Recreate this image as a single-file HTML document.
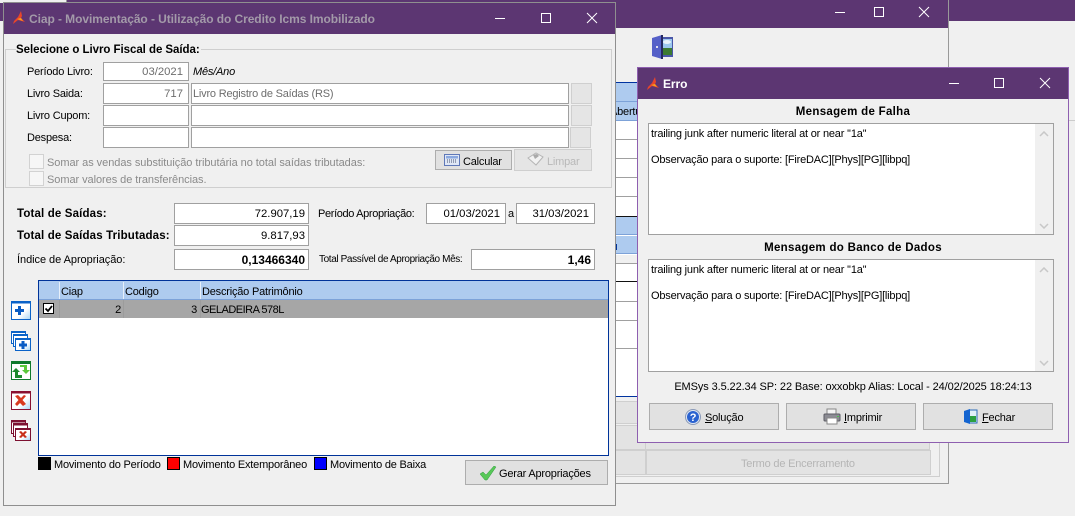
<!DOCTYPE html>
<html><head><meta charset="utf-8"><style>
html,body{margin:0;padding:0;width:1075px;height:516px;overflow:hidden;background:#f0f0f0}
body{position:relative;font-family:"Liberation Sans",sans-serif;font-size:11px;letter-spacing:-.2px;color:#000}
div,span,svg{position:absolute;box-sizing:border-box;white-space:nowrap}
.t{line-height:14px;height:14px;margin-top:1px}
.b{font-weight:bold;letter-spacing:.1px;font-size:11.5px}
.i{background:#fff;border:1px solid #a0a0a0;line-height:17px;padding:1px 5px 0 4px;color:#000;text-align:right;font-size:11.3px;letter-spacing:0}
.n{padding-right:3px}
.i.b{font-size:12px;letter-spacing:0}
.g{color:#6d6d6d}
.l{text-align:left}
.btn{background:#e1e1e1;border:1px solid #adadad}
.bd{background:#e5e5e5;border:1px solid #cfcfcf}
.h{background:#aecbef}
.ln{height:1px;background:#a0a0a0}
.tt{font-weight:bold;font-size:12px;line-height:14px;letter-spacing:-.07px}
.m{background:#fff;border:1px solid #a0a0a0}
.mt{left:2px;line-height:14px;margin-top:1px}
</style></head><body>
<!-- background windows -->
<div style="left:0;top:0;width:1075px;height:21px;background:#5c3672"></div>
<div style="left:0;top:0;width:66px;height:3px;background:#f0f0f0"></div>
<div style="left:66px;top:0;width:1px;height:3px;background:#999"></div>
<div style="left:616px;top:0;width:332px;height:28px;background:#5c3672"></div>
<div style="left:616px;top:28px;width:332px;height:455px;background:#f0f0f0"></div>
<div style="left:948px;top:0;width:1px;height:484px;background:#999"></div>
<div style="left:616px;top:483px;width:333px;height:1px;background:#999"></div>
<div style="left:949px;top:21px;width:126px;height:495px;background:#f0f0f0"></div>
<div style="left:1069px;top:120px;width:6px;height:1px;background:#ccc"></div>

<svg style="left:834px;top:6px" width="100" height="14" viewBox="0 0 100 14" fill="none" stroke="#fff" stroke-width="1"><path d="M1 6.500h10"/><path d="M40.500 1.500h9v9h-9z"/><path d="M85 1l10 10M95 1L85 11"/></svg>

<!-- door icon -->
<svg style="left:651px;top:34px" width="24" height="26" viewBox="0 0 24 26"><rect x="8" y="3" width="14" height="20" fill="#4a57a8"/><rect x="10" y="5" width="11" height="16" fill="#9cc8ee"/><rect x="10" y="14" width="11" height="7" fill="#3c7a32"/><ellipse cx="16" cy="8" rx="4" ry="2" fill="#e8f2fa"/><path d="M1 4l10-3v24L1 22z" fill="#5560c8"/><rect x="10" y="1" width="2" height="24" fill="#252a60"/><rect x="5" y="12" width="2" height="2" fill="#dde"/></svg>

<!-- behind table -->
<div style="left:616px;top:82px;width:25px;height:1px;background:#0033a0"></div>
<div class="h" style="left:616px;top:83px;width:25px;height:19px;border-bottom:1px solid #7da2d8"></div>
<div class="h" style="left:616px;top:102px;width:25px;height:19px;border-bottom:1px solid #7da2d8;overflow:hidden"><span class="t" style="left:-6px;top:2px">Abertu</span></div>
<div style="left:616px;top:121px;width:25px;height:275px;background:#fff"></div>
<div class="ln" style="left:616px;top:139px;width:25px"></div>
<div class="ln" style="left:616px;top:158px;width:25px"></div>
<div class="ln" style="left:616px;top:177px;width:25px"></div>
<div class="ln" style="left:616px;top:196px;width:25px"></div>
<div style="left:616px;top:216px;width:25px;height:1px;background:#111"></div>
<div class="h" style="left:616px;top:217px;width:25px;height:18px;border-bottom:1px solid #7da2d8"></div>
<div class="h" style="left:616px;top:236px;width:25px;height:18px;border-bottom:1px solid #7da2d8"></div>
<div style="left:616px;top:244px;width:1px;height:6px;background:#003399"></div>
<div style="left:616px;top:255px;width:25px;height:8px;background:#f0f0f0"></div>
<div style="left:616px;top:263px;width:25px;height:1px;background:#a0a0a0"></div>
<div style="left:616px;top:281px;width:25px;height:1px;background:#111"></div>
<div class="ln" style="left:616px;top:301px;width:25px"></div>
<div class="ln" style="left:616px;top:320px;width:25px"></div>
<div class="ln" style="left:616px;top:348px;width:25px"></div>
<div style="left:616px;top:396px;width:25px;height:1px;background:#0033a0"></div>
<div style="left:616px;top:401px;width:25px;height:23px;background:#e3e3e3;border-top:1px solid #cfcfcf;border-bottom:1px solid #cfcfcf"></div>
<div style="left:616px;top:425px;width:30px;height:25px;background:#e3e3e3;border:1px solid #cfcfcf;border-left:0"></div>
<div style="left:645px;top:425px;width:285px;height:25px;background:#e3e3e3;border:1px solid #cfcfcf"></div>
<div style="left:616px;top:450px;width:30px;height:25px;background:#e3e3e3;border:1px solid #cfcfcf;border-left:0"></div>
<div style="left:646px;top:450px;width:285px;height:25px;background:#e3e3e3;border:1px solid #cfcfcf"></div>
<div class="t" style="left:741px;top:456px;color:#b5b5b5">Termo de Encerramento</div>
<div style="left:616px;top:476px;width:324px;height:1px;background:#cfcfcf"></div>
<div style="left:939px;top:424px;width:1px;height:53px;background:#cfcfcf"></div>

<!-- main window -->
<div style="left:3px;top:2px;width:613px;height:504px;background:#f0f0f0;border:1px solid #8f8f8f"></div>
<div style="left:4px;top:3px;width:611px;height:31px;background:#5c3672"></div>
<svg style="left:13px;top:11px" width="12" height="13" viewBox="0 0 12 13"><path d="M8 0L5 6 1 10l-1 3 5-4 7 2-4-4 1-2z" fill="#e8452a"/><path d="M4 8l4-1 2 3z" fill="#f4a020"/></svg>
<div class="tt" style="left:29px;top:12px;color:#a39aa9">Ciap - Movimentação - Utilização do Credito Icms Imobilizado</div>
<svg style="left:494px;top:11px" width="106" height="14" viewBox="0 0 106 14" fill="none" stroke="#fff" stroke-width="1"><path d="M1 7.500h10"/><path d="M47.500 2.500h9v9h-9z"/><path d="M93 2l10 10M103 2L93 12"/></svg>

<div style="left:5px;top:49px;width:607px;height:139px;border:1px solid #cfcfcf"></div>
<div class="t b" style="left:16px;top:42px;background:#f0f0f0;padding-right:1px;letter-spacing:-.05px">Selecione o Livro Fiscal de Saída:</div>
<div class="t" style="left:27px;top:64px">Período Livro:</div>
<div class="t" style="left:27px;top:86px">Livro Saida:</div>
<div class="t" style="left:27px;top:108px">Livro Cupom:</div>
<div class="t" style="left:27px;top:130px">Despesa:</div>
<div class="i g" style="left:103px;top:62px;width:86px;height:19px">03/2021</div>
<div class="t" style="left:193px;top:64px;font-style:italic">Mês/Ano</div>
<div class="i g" style="left:103px;top:83px;width:86px;height:21px;line-height:18px">717</div>
<div class="i g l" style="left:191px;top:83px;width:378px;height:21px;line-height:18px;padding-left:1px;font-size:11px;letter-spacing:-.2px">Livro Registro de Saídas (RS)</div>
<div class="i" style="left:103px;top:105px;width:86px;height:21px"></div>
<div class="i" style="left:191px;top:105px;width:378px;height:21px"></div>
<div class="i" style="left:103px;top:127px;width:86px;height:21px"></div>
<div class="i" style="left:191px;top:127px;width:378px;height:21px"></div>
<div class="bd" style="left:571px;top:83px;width:21px;height:21px"></div>
<div class="bd" style="left:571px;top:105px;width:21px;height:21px"></div>
<div class="bd" style="left:570px;top:127px;width:21px;height:21px"></div>
<div style="left:29px;top:154px;width:15px;height:15px;background:#f6f6f6;border:1px solid #d2d2d2"></div>
<div class="t" style="left:47px;top:155px;color:#8a8a8a;letter-spacing:-.05px">Somar as vendas substituição tributária no total saídas tributadas:</div>
<div style="left:29px;top:171px;width:15px;height:15px;background:#f6f6f6;border:1px solid #d2d2d2"></div>
<div class="t" style="left:47px;top:172px;color:#8a8a8a;letter-spacing:-.06px">Somar valores de transferências.</div>
<div class="btn" style="left:435px;top:150px;width:77px;height:20px"></div>
<svg style="left:444px;top:154px" width="17" height="12" viewBox="0 0 17 12"><rect x=".5" y=".5" width="15" height="11" fill="#dfe7f6" stroke="#5f78b8"/><rect x="2" y="2" width="12" height="2.500" fill="#8aa8e0"/><path d="M3 6h10M3 8h10" stroke="#44506e" stroke-dasharray="1 1"/></svg>
<div class="t" style="left:463px;top:154px">Calcular</div>
<div class="bd" style="left:514px;top:149px;width:78px;height:22px"></div>
<svg style="left:527px;top:152px" width="18" height="15" viewBox="0 0 18 15"><path d="M1 6l8-5 7 4-7 8z" fill="#f2f2f2" stroke="#b5b5b5"/><path d="M6 3l4-1 2 2-4 3z" fill="#aaa"/></svg>
<div class="t" style="left:547px;top:154px;color:#b8b8b8">Limpar</div>

<div class="t b" style="left:17px;top:206px;letter-spacing:.15px">Total de Saídas:</div>
<div class="t b" style="left:17px;top:228px;letter-spacing:.15px">Total de Saídas Tributadas:</div>
<div class="t" style="left:17px;top:252px;letter-spacing:-.05px">Índice de Apropriação:</div>
<div class="i n" style="left:174px;top:203px;width:135px;height:21px;line-height:18px">72.907,19</div>
<div class="i n" style="left:174px;top:225px;width:135px;height:21px;line-height:18px">9.817,93</div>
<div class="i b n" style="left:174px;top:249px;width:135px;height:21px;line-height:18px">0,13466340</div>
<div class="t" style="left:318px;top:206px;letter-spacing:-.35px">Período Apropriação:</div>
<div class="i" style="left:426px;top:203px;width:80px;height:21px;line-height:18px">01/03/2021</div>
<div class="t" style="left:508px;top:206px">a</div>
<div class="i" style="left:516px;top:203px;width:79px;height:21px;line-height:18px">31/03/2021</div>
<div class="t" style="left:319px;top:252px;font-size:10px;letter-spacing:-.38px">Total Passível de Apropriação Mês:</div>
<div class="i b n" style="left:471px;top:249px;width:124px;height:21px;line-height:18px">1,46</div>

<!-- grid -->
<div style="left:38px;top:280px;width:571px;height:176px;background:#fff;border:1px solid #003399"></div>
<div class="h" style="left:39px;top:281px;width:569px;height:19px;border-bottom:1px solid #7da2d8"></div>
<div style="left:59px;top:282px;width:1px;height:17px;background:#e6effa"></div>
<div style="left:123px;top:282px;width:1px;height:17px;background:#e6effa"></div>
<div style="left:200px;top:282px;width:1px;height:17px;background:#e6effa"></div>
<div class="t" style="left:61px;top:284px">Ciap</div>
<div class="t" style="left:125px;top:284px">Codigo</div>
<div class="t" style="left:202px;top:284px">Descrição Patrimônio</div>
<div style="left:39px;top:300px;width:569px;height:18px;background:#a6a6a6"></div>
<div style="left:59px;top:300px;width:1px;height:18px;background:#9c9c9c"></div>
<div style="left:123px;top:300px;width:1px;height:18px;background:#9c9c9c"></div>
<div style="left:200px;top:300px;width:1px;height:18px;background:#9c9c9c"></div>
<svg style="left:43px;top:303px" width="12" height="12" viewBox="0 0 12 12"><rect x=".5" y=".5" width="10" height="10" fill="#fff" stroke="#000"/><path d="M2.500 5.500l2.500 2.500 4-5" fill="none" stroke="#000" stroke-width="1.800"/></svg>
<div class="t" style="left:100px;top:302px;width:21px;text-align:right">2</div>
<div class="t" style="left:180px;top:302px;width:17px;text-align:right">3</div>
<div class="t" style="left:201px;top:302px;letter-spacing:-.5px">GELADEIRA 578L</div>

<!-- side icons -->
<svg style="left:10px;top:300px" width="23" height="22" viewBox="0 0 23 22"><defs><linearGradient id="w" x1="0" y1="0" x2="1" y2="1"><stop offset="0" stop-color="#fff"/><stop offset=".6" stop-color="#fff"/><stop offset="1" stop-color="#a8d4f4"/></linearGradient></defs><rect x="1.500" y="1.500" width="19" height="18" fill="url(#w)" stroke="#0a62c8"/><rect x="1" y="1" width="20" height="2.500" fill="#0a62c8"/><path d="M8 6h3v3h3v3h-3v3H8v-3H5V9h3z" fill="#0a5cc4"/></svg>
<svg style="left:10px;top:330px" width="23" height="23" viewBox="0 0 23 23"><rect x="1.500" y="1.500" width="14" height="12" fill="#fff" stroke="#0a62c8"/><rect x="1" y="1" width="15" height="2" fill="#0a62c8"/><rect x="3.500" y="4.500" width="14" height="12" fill="#fff" stroke="#0a62c8"/><rect x="3" y="4" width="15" height="2" fill="#0a62c8"/><rect x="5.500" y="8.500" width="15" height="12" fill="url(#w)" stroke="#0a62c8"/><rect x="5" y="8" width="16" height="2" fill="#0a62c8"/><path d="M11.500 11h3v2.500H17v3h-2.500V19h-3v-2.500H9v-3h2.500z" fill="#0a5cc4"/></svg>
<svg style="left:10px;top:360px" width="23" height="22" viewBox="0 0 23 22"><rect x="1.500" y="1.500" width="19" height="18" fill="#fff" stroke="#0f7a2c"/><rect x="1" y="1" width="20" height="3" fill="#0f7a2c"/><path d="M2 12l4-4 4 4H8v3h4v3H5v-6z" fill="#1c8a2c"/><path d="M20 10l-4 4-4-4h2V7h-4V5h7v5z" fill="#5ac83a"/></svg>
<svg style="left:10px;top:390px" width="23" height="22" viewBox="0 0 23 22"><rect x="1.500" y="1.500" width="19" height="18" fill="url(#w)" stroke="#8a1030"/><rect x="1" y="1" width="20" height="2.500" fill="#8a1030"/><path d="M5 6l3-1 3 3 3-3 2 1-3.500 4 3.500 4-3 2-3-3-3 3-2-2 3.500-4z" fill="#d83a20"/></svg>
<svg style="left:10px;top:419px" width="23" height="24" viewBox="0 0 23 24"><rect x="1.500" y="1.500" width="14" height="13" fill="#fff" stroke="#7c1030"/><rect x="1" y="1" width="15" height="2.500" fill="#7c1030"/><rect x="3.500" y="4.500" width="14" height="13" fill="#fff" stroke="#7c1030"/><rect x="3" y="4" width="15" height="2.500" fill="#7c1030"/><rect x="5.500" y="9.500" width="15" height="12" fill="url(#w)" stroke="#7c1030"/><rect x="5" y="9" width="16" height="2" fill="#7c1030"/><path d="M9 13l2-1 2 2 2-2 2 1-2.500 2.500L17 18l-2 1-2-2-2 2-2-1 2.500-2.500z" fill="#c8301c"/></svg>

<!-- legend -->
<div style="left:38px;top:457px;width:13px;height:13px;background:#000"></div>
<div class="t" style="left:54px;top:457px">Movimento do Período</div>
<div style="left:167px;top:457px;width:13px;height:13px;background:#f00;border:1px solid #000"></div>
<div class="t" style="left:183px;top:457px">Movimento Extemporâneo</div>
<div style="left:314px;top:457px;width:13px;height:13px;background:#00f;border:1px solid #000"></div>
<div class="t" style="left:330px;top:457px">Movimento de Baixa</div>
<div class="btn" style="left:465px;top:460px;width:143px;height:25px"></div>
<svg style="left:480px;top:466px" width="17" height="15" viewBox="0 0 17 15"><path d="M0 8l3-2 3 3 8-9 2 1-9 13h-2z" fill="#58c858" stroke="#2e9a3e" stroke-width=".5"/></svg>
<div class="t" style="left:499px;top:466px">Gerar Apropriações</div>

<!-- error window -->
<div style="left:637px;top:67px;width:432px;height:376px;background:#f0f0f0;border:1px solid #8e5fb0"></div>
<div style="left:638px;top:68px;width:430px;height:31px;background:#5c3672"></div>
<svg style="left:647px;top:77px" width="12" height="13" viewBox="0 0 12 13"><path d="M8 0L5 6 1 10l-1 3 5-4 7 2-4-4 1-2z" fill="#e8452a"/><path d="M4 8l4-1 2 3z" fill="#f4a020"/></svg>
<div class="tt" style="left:663px;top:77px;color:#fff">Erro</div>
<svg style="left:948px;top:76px" width="106" height="14" viewBox="0 0 106 14" fill="none" stroke="#fff" stroke-width="1"><path d="M1 7.500h10"/><path d="M46.500 2.500h9v9h-9z"/><path d="M92 2l10 10M102 2L92 12"/></svg>

<div class="t b" style="left:648px;top:104px;width:410px;text-align:center;letter-spacing:.3px">Mensagem de Falha</div>
<div class="m" style="left:648px;top:123px;width:406px;height:112px">
<div class="mt" style="top:2px">trailing junk after numeric literal at or near ''1a''</div>
<div class="mt" style="top:28px">Observação para o suporte: [FireDAC][Phys][PG][libpq]</div>
<div style="right:0;top:0;width:18px;height:110px;background:#f0f0f0"></div>
<svg style="right:4px;top:7px" width="10" height="98" viewBox="0 0 10 98" fill="none" stroke="#c8c8c8" stroke-width="1.500"><path d="M1 5l4-4 4 4M1 93l4 4 4-4"/></svg>
</div>
<div class="t b" style="left:648px;top:240px;width:410px;text-align:center;letter-spacing:.3px">Mensagem do Banco de Dados</div>
<div class="m" style="left:648px;top:259px;width:406px;height:113px">
<div class="mt" style="top:2px">trailing junk after numeric literal at or near ''1a''</div>
<div class="mt" style="top:28px">Observação para o suporte: [FireDAC][Phys][PG][libpq]</div>
<div style="right:0;top:0;width:18px;height:111px;background:#f0f0f0"></div>
<svg style="right:4px;top:7px" width="10" height="99" viewBox="0 0 10 99" fill="none" stroke="#c8c8c8" stroke-width="1.500"><path d="M1 5l4-4 4 4M1 94l4 4 4-4"/></svg>
</div>
<div class="t" style="left:648px;top:379px;width:410px;text-align:center;letter-spacing:-.1px">EMSys 3.5.22.34 SP: 22 Base: oxxobkp Alias: Local - 24/02/2025 18:24:13</div>

<div class="btn" style="left:649px;top:403px;width:130px;height:27px"></div>
<svg style="left:685px;top:409px" width="16" height="16" viewBox="0 0 16 16"><circle cx="8" cy="8" r="7.500" fill="#dfe6f2" stroke="#8a9ab8"/><circle cx="8" cy="8" r="6" fill="#2a62d0"/><text x="8" y="12" font-size="11" font-weight="bold" fill="#fff" text-anchor="middle" font-family="Liberation Sans">?</text></svg>
<div class="t" style="left:705px;top:410px"><u>S</u>olução</div>
<div class="btn" style="left:786px;top:403px;width:130px;height:27px"></div>
<svg style="left:823px;top:408px" width="18" height="17" viewBox="0 0 18 17"><rect x="4" y="1" width="9" height="6" fill="#f4f4f4" stroke="#888"/><rect x="1" y="6" width="16" height="7" rx="1" fill="#8c8c94" stroke="#5c5c64"/><rect x="4" y="10" width="10" height="6" fill="#fff" stroke="#888"/><rect x="14" y="8" width="2" height="1" fill="#4ac04a"/></svg>
<div class="t" style="left:844px;top:410px"><u>I</u>mprimir</div>
<div class="btn" style="left:923px;top:403px;width:130px;height:27px"></div>
<svg style="left:963px;top:409px" width="15" height="15" viewBox="0 0 15 15"><rect x="6" y="1" width="8" height="13" fill="#dff0f8" stroke="#2a6cb8"/><rect x="7" y="7" width="6" height="6" fill="#2aa040"/><path d="M1 2l6-2v15l-6-2z" fill="#1464d0"/></svg>
<div class="t" style="left:982px;top:410px"><u>F</u>echar</div>
</body></html>
